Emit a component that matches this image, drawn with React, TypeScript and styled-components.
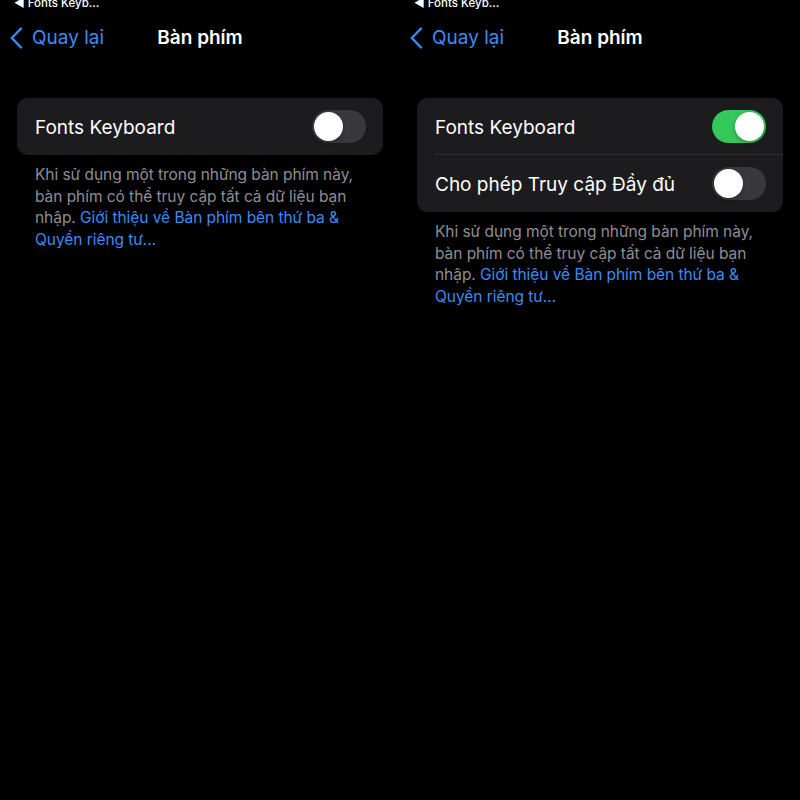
import * as React from 'react';
import styled, { createGlobalStyle } from 'styled-components';

const GlobalStyle = createGlobalStyle`
  html, body {
    margin: 0;
    padding: 0;
    background: #000;
  }
  body {
    font-family: Inter, "Noto Sans", "Liberation Sans", sans-serif;
    -webkit-font-smoothing: antialiased;
  }
`;

const Screen = styled.div`
  display: grid;
  grid-template-columns: 400px 400px;
  width: 800px;
  height: 800px;
  background: #000;
  overflow: hidden;
`;

const Panel = styled.div`
  display: flex;
  flex-direction: column;
`;

const StatusBar = styled.div`
  height: 10px;
  display: flex;
  align-items: flex-end;
  padding-left: 14px;
  overflow: hidden;
`;

const StatusLabel = styled.span`
  color: #fff;
  font-size: 11.5px;
  font-weight: 500;
  line-height: 12px;
  margin-bottom: 1px;
  white-space: nowrap;
`;

const NavBar = styled.div`
  height: 55px;
  display: grid;
  grid-template-columns: 1fr auto 1fr;
  align-items: center;
`;

const BackButton = styled.div`
  display: flex;
  align-items: center;
  gap: 9px;
  padding-left: 10px;
  color: #3b8cf5;
  font-size: 19px;
  font-weight: 400;
`;

const Title = styled.div`
  color: #fff;
  font-size: 19px;
  font-weight: 600;
  text-align: center;
`;

const Card = styled.div`
  margin: 33px 17px 0;
  background: #1c1c1e;
  border-radius: 11px;
  display: flex;
  flex-direction: column;
`;

const Row = styled.div<{ $divider?: boolean }>`
  height: 57px;
  display: flex;
  align-items: center;
  justify-content: space-between;
  padding: 0 17px 0 18px;
  position: relative;
  ${(p) =>
    p.$divider &&
    `
    &::after {
      content: '';
      position: absolute;
      left: 18px;
      right: 0;
      bottom: 0;
      height: 1px;
      background: #2e2e31;
    }
  `}
`;

const RowLabel = styled.span`
  color: #fff;
  font-size: 19px;
  font-weight: 400;
  margin-top: 1px;
`;

const Track = styled.div<{ $on: boolean }>`
  width: 54px;
  height: 33px;
  border-radius: 17px;
  background: ${(p) => (p.$on ? '#34c759' : '#39393d')};
  display: flex;
  align-items: center;
  justify-content: ${(p) => (p.$on ? 'flex-end' : 'flex-start')};
  padding: 0 2px;
  box-sizing: border-box;
`;

const Knob = styled.div`
  width: 29px;
  height: 29px;
  border-radius: 50%;
  background: #fff;
  box-shadow: 0 2px 4px rgba(0, 0, 0, 0.25);
`;

const Footer = styled.p`
  margin: 9px 30px 0 35px;
  color: #8e8e93;
  font-size: 15.5px;
  line-height: 21.6px;
  letter-spacing: -0.05px;
`;

const FooterLink = styled.span`
  color: #3b8cf5;
`;

function Chevron() {
  return (
    <svg width="13" height="22" viewBox="0 0 13 22" fill="none">
      <path d="M11 1.5 L1.8 11 L11 20.5" stroke="#3b8cf5" strokeWidth="2.4" strokeLinecap="round" strokeLinejoin="round" />
    </svg>
  );
}

function Toggle({ on }: { on: boolean }) {
  return (
    <Track $on={on}>
      <Knob />
    </Track>
  );
}

interface SettingRow {
  label: string;
  on: boolean;
}

function KeyboardScreen({ rows }: { rows: SettingRow[] }) {
  return (
    <Panel>
      <StatusBar>
        <StatusLabel>◀ Fonts Keyb...</StatusLabel>
      </StatusBar>
      <NavBar>
        <BackButton>
          <Chevron />
          <span>Quay lại</span>
        </BackButton>
        <Title>Bàn phím</Title>
        <span />
      </NavBar>
      <Card>
        {rows.map((row, i) => (
          <Row key={row.label} $divider={i < rows.length - 1}>
            <RowLabel>{row.label}</RowLabel>
            <Toggle on={row.on} />
          </Row>
        ))}
      </Card>
      <Footer>
        Khi sử dụng một trong những bàn phím này, bàn phím có thể truy cập tất cả dữ liệu bạn nhập.{' '}
        <FooterLink>Giới thiệu về Bàn phím bên thứ ba &amp; Quyền riêng tư…</FooterLink>
      </Footer>
    </Panel>
  );
}

export default function App() {
  return (
    <>
      <GlobalStyle />
      <Screen>
        <KeyboardScreen rows={[{ label: 'Fonts Keyboard', on: false }]} />
        <KeyboardScreen
          rows={[
            { label: 'Fonts Keyboard', on: true },
            { label: 'Cho phép Truy cập Đầy đủ', on: false },
          ]}
        />
      </Screen>
    </>
  );
}
